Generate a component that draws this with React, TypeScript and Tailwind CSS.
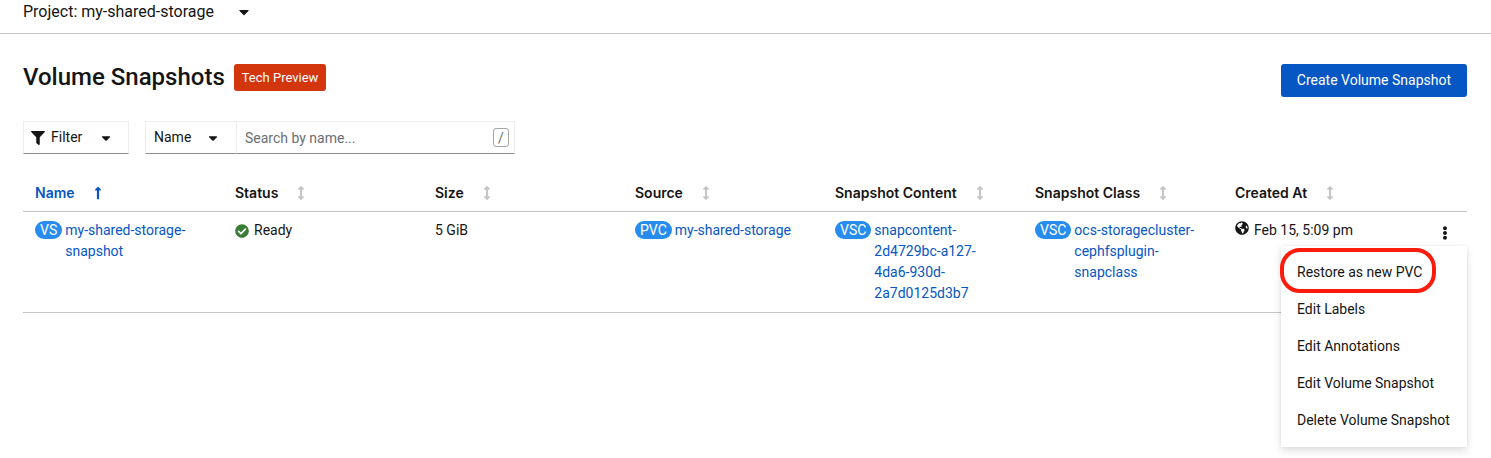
import { ReactNode } from "react";
import {
  FaArrowsAltV,
  FaCaretDown,
  FaCheckCircle,
  FaEllipsisV,
  FaFilter,
  FaGlobeAmericas,
  FaLongArrowAltUp,
} from "react-icons/fa";

const columns = [
  "Name",
  "Status",
  "Size",
  "Source",
  "Snapshot Content",
  "Snapshot Class",
  "Created At",
];

const actions = [
  "Restore as new PVC",
  "Edit Labels",
  "Edit Annotations",
  "Edit Volume Snapshot",
  "Delete Volume Snapshot",
];

function ResourceLink({ kind, children }: { kind: string; children: ReactNode }) {
  return (
    <div className="flex items-start gap-[3px]">
      <span className="mt-px flex h-[18px] shrink-0 items-center rounded-full bg-[#288cee] px-[5px] text-sm text-white">
        {kind}
      </span>
      <a href="#" className="min-w-0 text-[#0656c4] hover:underline">
        {children}
      </a>
    </div>
  );
}

function ActionMenu() {
  return (
    <ul
      role="menu"
      className="absolute top-[34px] right-0 z-10 min-w-[186px] bg-white py-2 whitespace-nowrap shadow-[0_4px_8px_rgba(3,3,3,0.12),0_0_4px_rgba(3,3,3,0.06)]"
    >
      {actions.map((action, index) => (
        <li key={action} role="none" className="relative">
          <button role="menuitem" className="w-full px-4 py-2 text-left hover:bg-gray-100">
            {action}
          </button>
          {index === 0 && (
            <span className="pointer-events-none absolute -top-1.5 -bottom-0.5 -left-px w-[156px] rounded-[20px] border-4 border-[#fc1c0c]" />
          )}
        </li>
      ))}
    </ul>
  );
}

export default function App() {
  return (
    <div className="min-h-screen bg-white font-['Roboto','Inter',sans-serif] text-sm leading-[21px] text-[#151515]">
      <header className="flex h-[34px] items-start border-b border-[#c6c6c6] px-[23px]">
        <div className="relative flex items-center">
          <select
            aria-label="Project"
            className="h-6 appearance-none bg-transparent pr-[38px] text-base"
          >
            <option>Project: my-shared-storage</option>
          </select>
          <FaCaretDown className="pointer-events-none absolute right-0 size-4" />
        </div>
      </header>

      <main className="pt-[30px] pr-6 pb-3 pl-[23px]">
        <div className="flex items-start justify-between">
          <div className="flex items-center gap-[9px]">
            <h1 className="text-2xl leading-[27px] font-medium">Volume Snapshots</h1>
            <span className="rounded-[3px] bg-[#d3350d] px-2 py-[3px] text-[13px] text-white">
              Tech Preview
            </span>
          </div>
          <button className="rounded-[3px] bg-[#0656c4] px-4 py-1.5 text-white">
            Create Volume Snapshot
          </button>
        </div>

        <div className="mt-6 flex gap-4">
          <button className="flex h-[33px] w-[106px] items-center border border-[#ededed] border-b-[#8a8d90] px-[7px]">
            <FaFilter className="size-3.5" />
            <span className="ml-1.5">Filter</span>
            <FaCaretDown className="ml-auto mr-2 size-3.5" />
          </button>
          <div className="flex h-[33px]">
            <div className="relative flex items-center">
              <select
                aria-label="Search attribute"
                className="h-full w-[91px] appearance-none border border-r-0 border-[#ededed] border-b-[#8a8d90] bg-transparent px-2"
              >
                <option>Name</option>
                <option>Label</option>
              </select>
              <FaCaretDown className="pointer-events-none absolute right-4 size-3.5" />
            </div>
            <div className="relative flex items-center">
              <input
                type="text"
                aria-label="Search by name"
                placeholder="Search by name..."
                className="h-full w-[279px] border border-[#ededed] border-b-[#8a8d90] px-2 placeholder:text-[#6a6e73]"
              />
              <kbd className="absolute right-1.5 flex h-[19px] w-4 items-center justify-center rounded-[3px] border border-[#a5a5a5] font-['Roboto',sans-serif] text-sm text-[#6a6e73]">
                /
              </kbd>
            </div>
          </div>
        </div>

        <table className="mt-5 w-full table-fixed border-collapse text-left">
          <thead>
            <tr className="border-b border-[#c6c6c6]">
              {columns.map((column, index) => (
                <th
                  key={column}
                  className={index === 0 ? "px-3 py-2 text-[#0656c4]" : "px-3 py-2"}
                >
                  <button className="flex items-center gap-4 font-['Inter',sans-serif] font-semibold whitespace-nowrap">
                    {column}
                    {index === 0 ? (
                      <FaLongArrowAltUp className="size-3.5" />
                    ) : (
                      <FaArrowsAltV className="size-3.5 text-[#c6c6c6]" />
                    )}
                  </button>
                </th>
              ))}
              <th className="w-11" aria-label="Actions" />
            </tr>
          </thead>
          <tbody>
            <tr className="border-b border-[#c6c6c6] align-top">
              <td className="py-2 pr-6 pl-3">
                <ResourceLink kind="VS">my-shared-storage-snapshot</ResourceLink>
              </td>
              <td className="py-2 pr-6 pl-3">
                <span className="flex items-center gap-[5px]">
                  <FaCheckCircle className="size-3.5 text-[#3a7d35]" />
                  Ready
                </span>
              </td>
              <td className="py-2 pr-6 pl-3">5 GiB</td>
              <td className="py-2 pr-6 pl-3">
                <ResourceLink kind="PVC">my-shared-storage</ResourceLink>
              </td>
              <td className="py-2 pr-6 pl-3">
                <ResourceLink kind="VSC">
                  snapcontent-2d4729bc-a127-4da6-930d-2a7d0125d3b7
                </ResourceLink>
              </td>
              <td className="py-2 pr-6 pl-3">
                <ResourceLink kind="VSC">ocs-storagecluster-cephfsplugin-snapclass</ResourceLink>
              </td>
              <td className="py-2 pr-6 pl-3">
                <span className="flex items-start gap-[5px] whitespace-nowrap">
                  <FaGlobeAmericas className="mt-px size-3.5" />
                  Feb 15, 5:09 pm
                </span>
              </td>
              <td className="relative">
                <button
                  aria-label="Actions"
                  className="flex h-[42px] w-full items-center justify-center"
                >
                  <FaEllipsisV className="size-3.5" />
                </button>
                <ActionMenu />
              </td>
            </tr>
          </tbody>
        </table>
      </main>
    </div>
  );
}
